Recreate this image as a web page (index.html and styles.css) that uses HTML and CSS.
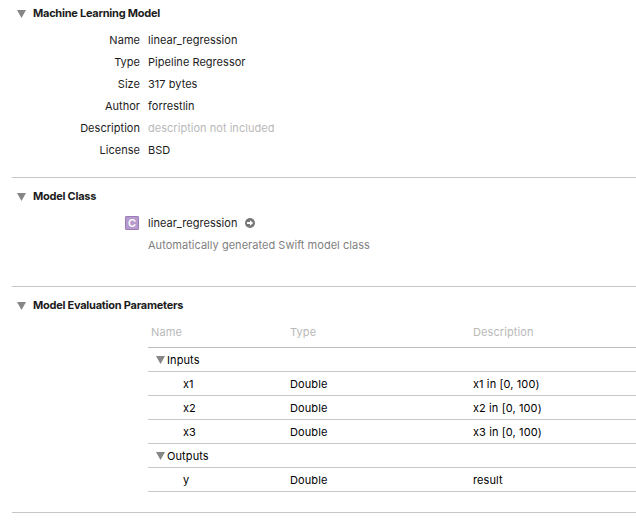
FILE: index.html
```html
<!DOCTYPE html>
<html lang="en">
<head>
<meta charset="utf-8">
<title>linear_regression</title>
<link rel="stylesheet" href="styles.css">
</head>
<body>
<main class="inspector">
  <section class="section">
    <h2 class="heading"><span class="disclosure"></span>Machine Learning Model</h2>
    <dl class="fields">
      <dt>Name</dt><dd>linear_regression</dd>
      <dt>Type</dt><dd>Pipeline Regressor</dd>
      <dt>Size</dt><dd>317 bytes</dd>
      <dt>Author</dt><dd>forrestlin</dd>
      <dt>Description</dt><dd class="placeholder">description not included</dd>
      <dt>License</dt><dd>BSD</dd>
    </dl>
  </section>
  <section class="section section-class">
    <h2 class="heading"><span class="disclosure"></span>Model Class</h2>
    <dl class="fields">
      <dt><span class="badge">C</span></dt>
      <dd>linear_regression
        <svg class="go" width="10" height="10" viewBox="0 0 10 10"><circle cx="5" cy="5" r="5" fill="#777"/><path d="M2 4.1h3V2.2L8.2 5 5 7.8V5.9H2z" fill="#fff"/></svg>
      </dd>
      <dt></dt><dd class="note">Automatically generated Swift model class</dd>
    </dl>
  </section>
  <section class="section section-params">
    <h2 class="heading"><span class="disclosure"></span>Model Evaluation Parameters</h2>
    <div class="table">
      <div class="row head"><span>Name</span><span>Type</span><span>Description</span></div>
      <div class="row group"><span><i class="disclosure"></i>Inputs</span></div>
      <div class="row"><span>x1</span><span>Double</span><span>x1 in [0, 100)</span></div>
      <div class="row"><span>x2</span><span>Double</span><span>x2 in [0, 100)</span></div>
      <div class="row"><span>x3</span><span>Double</span><span>x3 in [0, 100)</span></div>
      <div class="row group"><span><i class="disclosure"></i>Outputs</span></div>
      <div class="row"><span>y</span><span>Double</span><span>result</span></div>
    </div>
  </section>
</main>
</body>
</html>
```
FILE: styles.css
```css
* { box-sizing: border-box; }
body {
  margin: 0;
  background: #fff;
  color: #1c1c1c;
  font: 11px/22px Inter, "Liberation Sans", sans-serif;
  letter-spacing: 0.03px;
  overflow: hidden;
}
.inspector { padding-left: 12px; }
.section {
  padding: 2px 0 16px;
  border-bottom: 1px solid #c6c6c6;
}
.section-class { padding: 7px 0 30px; }
.section-params { padding: 7px 0 20px; }
.heading {
  display: flex;
  align-items: center;
  margin: 0 0 5px;
  padding-left: 5px;
  font-size: 11px;
  font-weight: 650;
  letter-spacing: -0.25px;
}
.section-params .heading { margin-bottom: 6px; }
.disclosure {
  flex: none;
  width: 9px;
  height: 8px;
  background: #868686;
  clip-path: polygon(0 0, 100% 0, 50% 100%);
}
.heading .disclosure { margin: 2px 7px 0 0; }
.fields {
  display: grid;
  grid-template-columns: 128px 1fr;
  grid-auto-rows: 22px;
  column-gap: 8px;
  margin: 0;
}
dt { display: flex; justify-content: flex-end; align-items: center; }
dd { display: flex; align-items: center; margin: 0; }
.placeholder { color: #b9b9b9; }
.note { color: #7f7f7f; }
.badge {
  width: 14px;
  height: 14px;
  margin-right: 1px;
  border: 1px solid #9b7cb5;
  border-radius: 1px;
  background: #b79bce;
  color: #fff;
  font-size: 11px;
  font-weight: 600;
  line-height: 12px;
  letter-spacing: 0;
  text-align: center;
}
.go { margin-left: 8px; }
.table { margin-left: 136px; color: #000; letter-spacing: 0.1px; }
.row {
  display: grid;
  grid-template-columns: 107px 183px 1fr;
  height: 24px;
  padding-left: 35px;
  border-bottom: 1px solid #c9c9c9;
  line-height: 24px;
}
.head {
  grid-template-columns: 139px 183px 1fr;
  height: 26px;
  padding-left: 3px;
  border-color: #bdbdbd;
  color: #b9b9b9;
  line-height: 21px;
}
.group { padding-left: 8px; }
.group span { display: flex; align-items: center; }
.group .disclosure { margin-right: 2px; }
```
